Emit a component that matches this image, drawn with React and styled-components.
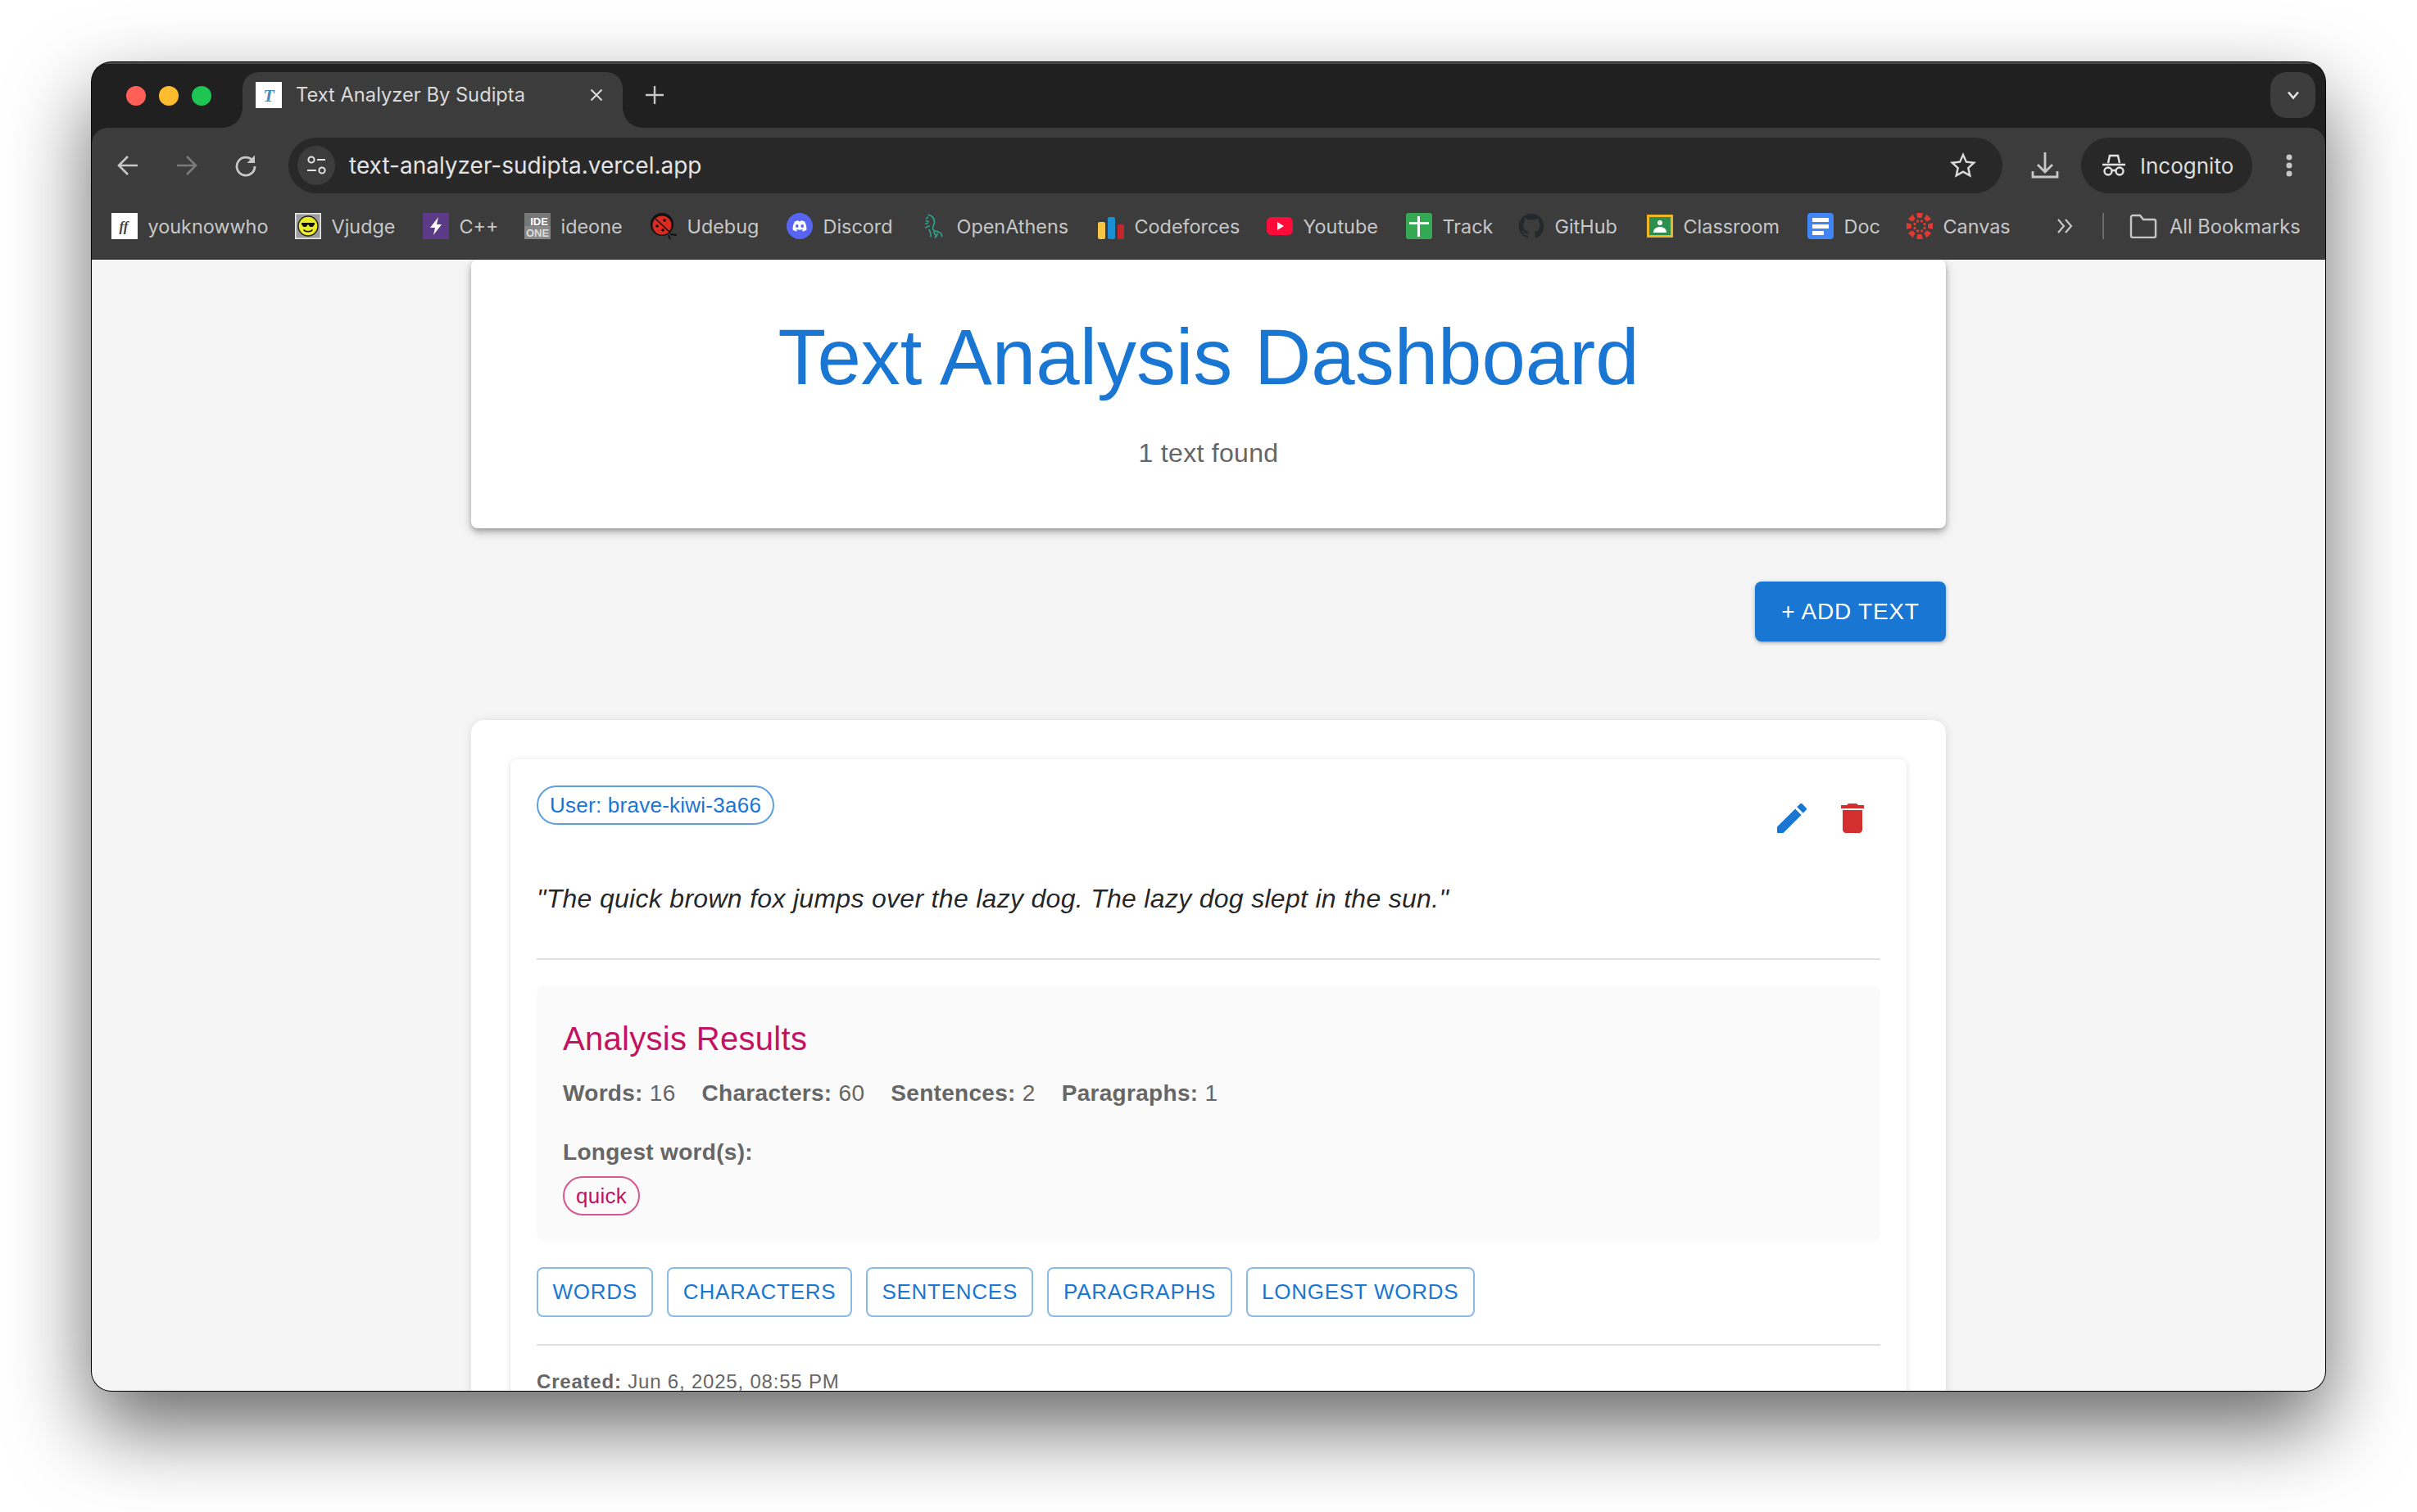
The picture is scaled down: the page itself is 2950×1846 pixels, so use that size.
import React from "react";
import styled, { createGlobalStyle } from "styled-components";

const GlobalStyle = createGlobalStyle`
  html, body { margin: 0; padding: 0; background: #fff; }
  * { box-sizing: border-box; }
`;

const UI = `Inter, "Noto Sans", sans-serif`;
const WEB = `"Liberation Sans", Arial, sans-serif`;

const Stage = styled.div`
  width: 2950px;
  height: 1846px;
  padding: 76px 112px 148px;
  background: #fff;
  overflow: hidden;
`;
const Win = styled.div`
  width: 2726px;
  height: 1622px;
  border-radius: 24px;
  overflow: hidden;
  display: flex;
  flex-direction: column;
  background: #202020;
  box-shadow: 0 0 0 1px #000, 0 44px 100px rgba(0, 0, 0, 0.6);
`;
const TabStrip = styled.div`
  height: 80px;
  flex: none;
  display: flex;
  align-items: flex-end;
  padding-left: 42px;
  padding-right: 12px;
  background: #202020;
  border-top: 2px solid #4a4a4a;
`;
const Lights = styled.div`
  display: flex;
  gap: 16px;
  align-self: flex-start;
  margin-top: 27px;
`;
const Light = styled.span`
  width: 24px;
  height: 24px;
  border-radius: 50%;
  background: ${(p) => p.$c};
`;
const Tab = styled.div`
  position: relative;
  width: 464px;
  height: 68px;
  margin-left: 38px;
  padding: 12px 0 0 16px;
  display: flex;
  align-items: flex-start;
  background: #3c3c3c;
  border-radius: 20px 20px 0 0;
  color: #dadada;
  font: 400 23.7px ${UI};
  &::before, &::after {
    content: "";
    position: absolute;
    bottom: 0;
    width: 24px;
    height: 24px;
  }
  &::before {
    left: -24px;
    background: radial-gradient(circle at 0 0, transparent 23.5px, #3c3c3c 24px);
  }
  &::after {
    right: -24px;
    background: radial-gradient(circle at 100% 0, transparent 23.5px, #3c3c3c 24px);
  }
`;
const Favicon = styled.span`
  width: 32px;
  height: 32px;
  flex: none;
  display: flex;
  background: #fff;
`;
const TabTitle = styled.span`
  margin-left: 17px;
  width: 278px;
  line-height: 32px;
  white-space: nowrap;
`;
const CloseBox = styled.span`
  margin-left: 79px;
  width: 20px;
  height: 32px;
  display: flex;
  align-items: center;
  justify-content: center;
`;
const NewTab = styled.span`
  margin-left: 28px;
  align-self: flex-start;
  margin-top: 27px;
  width: 24px;
  height: 24px;
  display: flex;
`;
const StripEnd = styled.span`
  margin-left: auto;
  align-self: flex-start;
  margin-top: 10px;
  width: 55px;
  height: 56px;
  border-radius: 20px;
  background: #3c3c3c;
  display: flex;
  align-items: center;
  justify-content: center;
`;
const Chrome = styled.div`
  flex: none;
  height: 161px;
  background: #3c3c3c;
  border-radius: 20px 20px 0 0;
  border-bottom: 1px solid #2c2c2c;
  display: flex;
  flex-direction: column;
`;
const Toolbar = styled.div`
  display: flex;
  align-items: center;
  height: 68px;
  margin-top: 12px;
  padding: 0 26px 0 8px;
  flex: none;
`;
const NavBtn = styled.span`
  width: 72px;
  display: flex;
  justify-content: center;
  flex: none;
`;
const Omnibox = styled.div`
  flex: 1;
  height: 68px;
  margin-left: 16px;
  border-radius: 34px;
  background: #282828;
  display: flex;
  align-items: center;
  padding: 0 32px 0 11px;
`;
const SiteInfo = styled.span`
  width: 46px;
  height: 48px;
  border-radius: 50%;
  background: #3c3c3c;
  display: flex;
  align-items: center;
  justify-content: center;
  flex: none;
`;
const Url = styled.span`
  margin-left: 17px;
  flex: 1;
  font: 400 28px ${UI};
  color: #e3e3e3;
  white-space: nowrap;
`;
const Download = styled.span`
  margin: 0 26px 0 34px;
  width: 36px;
  display: flex;
  flex: none;
`;
const Incognito = styled.div`
  width: 209px;
  height: 68px;
  border-radius: 34px;
  background: #282828;
  display: flex;
  align-items: center;
  padding-left: 25px;
  gap: 17px;
  color: #dcdcdc;
  font: 400 26px ${UI};
  flex: none;
`;
const Dots = styled.span`
  margin-left: 27px;
  width: 36px;
  display: flex;
  justify-content: center;
  flex: none;
`;
const Bookmarks = styled.div`
  display: flex;
  align-items: center;
  height: 56px;
  margin-top: 12px;
  padding-left: 24px;
  font: 400 23.4px ${UI};
  color: #c7c7c7;
`;
const Bookmark = styled.div`
  display: flex;
  align-items: center;
  width: ${(p) => p.$w}px;
  flex: none;
  white-space: nowrap;
  gap: 12.5px;
`;
const BookIcon = styled.span`
  width: ${(p) => p.$w || 32}px;
  height: 32px;
  display: flex;
  flex: none;
`;
const More = styled.span`
  width: 36px;
  display: flex;
  justify-content: center;
  flex: none;
`;
const Sep = styled.span`
  width: 2px;
  height: 32px;
  margin-left: 28px;
  background: #6a6a6a;
  flex: none;
`;
const AllMarks = styled.div`
  margin-left: 31px;
  display: flex;
  align-items: center;
  gap: 15px;
  font-size: 23.6px;
  white-space: nowrap;
`;

const Page = styled.main`
  flex: 1;
  min-height: 0;
  overflow: hidden;
  background: #f5f5f5;
  font-family: ${WEB};
`;
const Container = styled.div`
  width: 1800px;
  margin: 0 auto;
`;
const HeaderCard = styled.header`
  height: 328px;
  padding-top: 63px;
  background: #fff;
  border-radius: 8px;
  text-align: center;
  box-shadow: 0 3px 6px -1px rgba(0, 0, 0, 0.25), 0 6px 10px rgba(0, 0, 0, 0.14), 0 2px 18px rgba(0, 0, 0, 0.1);
`;
const Title = styled.h1`
  margin: 0 0 37px;
  font-size: 96px;
  line-height: 112px;
  font-weight: 400;
  color: #1976d2;
`;
const Subtitle = styled.p`
  margin: 0;
  font-size: 32px;
  line-height: 48px;
  letter-spacing: 0.3px;
  color: #666;
`;
const ActionRow = styled.div`
  margin-top: 65px;
  display: flex;
  justify-content: flex-end;
`;
const AddButton = styled.button`
  width: 233px;
  height: 73px;
  border: 0;
  border-radius: 8px;
  background: #1976d2;
  color: #fff;
  font: 500 28px ${WEB};
  letter-spacing: 0.8px;
  text-transform: uppercase;
  box-shadow: 0 3px 1px -2px rgba(0, 0, 0, 0.2), 0 2px 4px rgba(0, 0, 0, 0.2), 0 1px 6px rgba(0, 0, 0, 0.12);
`;
const ListCard = styled.section`
  margin-top: 96px;
  padding: 48px;
  background: #fff;
  border-radius: 16px;
  box-shadow: 0 2px 8px rgba(0, 0, 0, 0.08), 0 0 14px rgba(0, 0, 0, 0.05);
`;
const TextCard = styled.article`
  padding: 32px;
  background: #fff;
  border-radius: 8px;
  box-shadow: 0 2px 6px rgba(0, 0, 0, 0.1), 0 0 8px rgba(0, 0, 0, 0.05);
`;
const CardTop = styled.div`
  display: flex;
  justify-content: space-between;
  align-items: flex-start;
  height: 80px;
  margin-bottom: 34px;
`;
const Chip = styled.span`
  display: inline-flex;
  align-items: center;
  height: 48px;
  padding: 0 14px;
  border-radius: 24px;
  border: 2px solid ${(p) => p.$border};
  color: ${(p) => p.$color};
  font-size: 26px;
  letter-spacing: 0.25px;
  white-space: nowrap;
`;
const Actions = styled.div`
  display: flex;
  gap: 26px;
  padding: 16px 10px 0 0;
`;
const Quote = styled.p`
  margin: 0 0 49px;
  font-size: 32px;
  line-height: 48px;
  letter-spacing: 0.3px;
  font-style: italic;
  color: rgba(0, 0, 0, 0.87);
`;
const Rule = styled.hr`
  margin: 0;
  border: 0;
  height: 2px;
  background: #e0e0e0;
`;
const Analysis = styled.div`
  margin: 32px 0;
  height: 311px;
  padding: 32px;
  background: #fafafa;
  border-radius: 8px;
`;
const AnalysisTitle = styled.h2`
  margin: 0 0 11px;
  font-size: 40px;
  line-height: 64px;
  font-weight: 400;
  letter-spacing: 0.3px;
  color: #c51162;
`;
const Stats = styled.div`
  display: flex;
  gap: 32px;
  margin-bottom: 24px;
  font-size: 28px;
  line-height: 48px;
  letter-spacing: 0.3px;
  color: #666;
`;
const LongestLabel = styled.div`
  font-size: 28px;
  line-height: 48px;
  letter-spacing: 0.3px;
  color: #666;
  font-weight: 700;
  margin-bottom: 5px;
`;
const Tabs = styled.div`
  display: flex;
  gap: 17px;
  margin-bottom: 33px;
`;
const Outlined = styled.button`
  height: 61px;
  padding: 0 17.5px;
  border: 2px solid rgba(25, 118, 210, 0.5);
  border-radius: 8px;
  background: transparent;
  color: #1976d2;
  font: 500 26px ${WEB};
  letter-spacing: 0.74px;
  text-transform: uppercase;
`;
const Created = styled.p`
  margin: 30px 0 0;
  font-size: 24px;
  line-height: 28px;
  color: #666;
  letter-spacing: 0.8px;
`;

const Ico = ({ s = 32, vb = "0 0 32 32", children, ...r }) => (
  <svg width={s} height={s} viewBox={vb} fill="none" {...r}>{children}</svg>
);

const icons = {
  ykw: (
    <Ico>
      <rect width="32" height="32" fill="#fff" />
      <text x="15" y="22" textAnchor="middle" fontFamily="Liberation Serif" fontStyle="italic" fontWeight="700" fontSize="17" fill="#444">ff</text>
    </Ico>
  ),
  vj: (
    <Ico>
      <rect width="32" height="32" fill="#e8e8e8" />
      <rect x="1.500" y="1.500" width="29" height="29" fill="#9c9c9c" />
      <circle cx="16" cy="16" r="12" fill="#ecec24" stroke="#222" strokeWidth="1.5" />
      <path d="M8 12h16v2l-2.500 3h-3l-2.500-3-2.500 3h-3L8 14z" fill="#111" />
      <path d="M10.500 20.500c2.500 3 8.500 3 11 0" stroke="#111" strokeWidth="1.6" />
    </Ico>
  ),
  cpp: (
    <Ico>
      <rect width="32" height="32" fill="#5b3a87" />
      <path d="M19 5 9 18h6l-2 9 10-13h-6z" fill="#fff" />
    </Ico>
  ),
  ide: (
    <Ico>
      <rect width="32" height="32" fill="#777" />
      <rect y="16" width="32" height="16" fill="#888" />
      <text x="18" y="15" textAnchor="middle" fontFamily="Liberation Sans" fontWeight="700" fontSize="13" fill="#fff">IDE</text>
      <text x="16" y="29" textAnchor="middle" fontFamily="Liberation Sans" fontWeight="700" fontSize="13" fill="#ddd">ONE</text>
    </Ico>
  ),
  ude: (
    <Ico>
      <path d="M24 26l8 1M22 27l2 5" stroke="#111" strokeWidth="2" />
      <circle cx="14" cy="14" r="14" fill="#111" />
      <ellipse cx="14" cy="15" rx="11.500" ry="11.500" fill="#dc2a20" />
      <path d="M6 7l17 16" stroke="#111" strokeWidth="1.500" />
      <circle cx="8" cy="16" r="1.800" fill="#111" /><circle cx="17" cy="9" r="1.800" fill="#111" /><circle cx="15" cy="21" r="1.800" fill="#111" />
    </Ico>
  ),
  discord: (
    <Ico>
      <circle cx="16" cy="16" r="16" fill="#5865f2" />
      <path d="M10 10.500c2-1 3.500-1.300 4.300-1.300l.5 1c.8-.1 1.600-.1 2.400 0l.5-1c.8 0 2.300.3 4.300 1.300 1.800 3 2.600 6.300 2.400 10-1.500 1.200-3 1.800-4.400 2l-1-1.700c.6-.2 1.100-.5 1.600-.8l-.4-.3c-2.600 1.200-5.700 1.200-8.400 0l-.4.3c.5.300 1 .6 1.600.8l-1 1.700c-1.400-.2-2.900-.8-4.400-2-.2-3.700.6-7 2.400-10z" fill="#fff" />
      <ellipse cx="12.800" cy="16" rx="1.800" ry="2.100" fill="#5865f2" />
      <ellipse cx="19.200" cy="16" rx="1.800" ry="2.100" fill="#5865f2" />
    </Ico>
  ),
  athens: (
    <Ico>
      <g stroke="#2f9e88" strokeWidth="1.900" strokeLinecap="round">
        <path d="M8 1c5 1 8 4 8 10 0 4-3 5-2 9 1 3 5 3 8 4 3 1 4 3 4 6" />
        <path d="M7 4l-2 2M5 9l3 1M4 13l3-1M4 18l5-2M9 21c1 3 3 5 2 9M15 24c1 2 3 4 3 7M20 26c0 2-1 4-3 5" />
      </g>
    </Ico>
  ),
  cf: (
    <Ico>
      <rect x="0" y="11" width="9" height="21" rx="2" fill="#f6c544" />
      <rect x="12" y="5" width="9" height="27" rx="2" fill="#1b8fd4" />
      <rect x="24" y="14" width="8" height="18" rx="2" fill="#c1272d" />
    </Ico>
  ),
  yt: (
    <Ico>
      <rect x="0" y="5" width="32" height="22" rx="6" fill="#ff0b3a" />
      <path d="M13 11l8 5-8 5z" fill="#fff" />
    </Ico>
  ),
  track: (
    <Ico>
      <rect width="32" height="32" rx="3" fill="#34a853" />
      <path d="M4 11h24v3H4zM14 4h3v25h-3z" fill="#fff" />
    </Ico>
  ),
  gh: (
    <Ico vb="0 0 24 24">
      <path d="M12 .5C5.650.5.500 5.650.500 12c0 5.100 3.300 9.400 7.900 10.900.6.100.800-.250.800-.550v-2c-3.200.700-3.900-1.500-3.900-1.500-.500-1.300-1.300-1.700-1.300-1.700-1-.700.100-.700.100-.700 1.200.100 1.800 1.200 1.800 1.200 1 1.800 2.700 1.300 3.400 1 .100-.750.400-1.300.700-1.600-2.600-.300-5.300-1.300-5.300-5.700 0-1.300.450-2.300 1.200-3.100-.100-.300-.500-1.500.100-3.100 0 0 1-.300 3.300 1.200a11.400 11.400 0 0 1 6 0c2.300-1.500 3.300-1.200 3.300-1.200.650 1.600.250 2.800.100 3.100.750.800 1.200 1.850 1.200 3.100 0 4.400-2.700 5.400-5.300 5.700.450.350.800 1.100.800 2.200v3.250c0 .300.200.650.800.550A11.500 11.500 0 0 0 23.500 12C23.500 5.650 18.350.500 12 .500z" fill="#24292e" />
    </Ico>
  ),
  classroom: (
    <Ico>
      <rect y="2" width="32" height="28" fill="#f0b429" />
      <rect x="3" y="5" width="26" height="22" fill="#2c8f4e" />
      <circle cx="16" cy="12" r="3" fill="#fff" />
      <path d="M8 24c0-5 4-7 8-7s8 2 8 7z" fill="#fff" />
    </Ico>
  ),
  doc: (
    <Ico>
      <rect width="32" height="32" rx="4" fill="#4285f4" />
      <path d="M6 6h20v5H6zM6 14h20v5H6zM6 22h14v5H6z" fill="#fff" />
    </Ico>
  ),
  canvas: (
    <Ico>
      <g fill="#e03a32">
        {[0, 45, 90, 135, 180, 225, 270, 315].map((a) => (
          <path key={a} d="M12 0h8l-1.500 6h-5z" transform={`rotate(${a} 16 16)`} />
        ))}
        {[22, 67, 112, 157, 202, 247, 292, 337].map((a) => (
          <circle key={a} cx="16" cy="9.500" r="1.700" transform={`rotate(${a} 16 16)`} />
        ))}
      </g>
    </Ico>
  ),
};

const marks = [
  ["youknowwho", "ykw", 224],
  ["Vjudge", "vj", 156],
  ["C++", "cpp", 124],
  ["ideone", "ide", 154],
  ["Udebug", "ude", 166],
  ["Discord", "discord", 166],
  ["OpenAthens", "athens", 214, 29],
  ["Codeforces", "cf", 206],
  ["Youtube", "yt", 170],
  ["Track", "track", 137],
  ["GitHub", "gh", 157],
  ["Classroom", "classroom", 196],
  ["Doc", "doc", 121],
  ["Canvas", "canvas", 175],
];

export default function App() {
  return (
    <Stage>
      <GlobalStyle />
      <Win>
        <TabStrip>
          <Lights>
            <Light $c="#ff5f57" />
            <Light $c="#febc2e" />
            <Light $c="#1fc552" />
          </Lights>
          <Tab>
            <Favicon>
              <Ico>
                <text x="16" y="24" textAnchor="middle" fontFamily="Liberation Serif" fontStyle="italic" fontWeight="700" fontSize="22" fill="#4a8bb8">T</text>
              </Ico>
            </Favicon>
            <TabTitle>Text Analyzer By Sudipta</TabTitle>
            <CloseBox>
              <Ico s={16} vb="0 0 16 16"><path d="M1.500 1.500l13 13M14.500 1.500l-13 13" stroke="#d8d8d8" strokeWidth="2.200" /></Ico>
            </CloseBox>
          </Tab>
          <NewTab>
            <Ico s={22} vb="0 0 22 22"><path d="M11 0v22M0 11h22" stroke="#c7c7c7" strokeWidth="2.400" /></Ico>
          </NewTab>
          <StripEnd>
            <Ico s={18} vb="0 0 18 18"><path d="M3 5.500l6 7 6-7" stroke="#e3e3e3" strokeWidth="2.600" /></Ico>
          </StripEnd>
        </TabStrip>
        <Chrome>
          <Toolbar>
            <NavBtn>
              <Ico s={28} vb="0 0 28 28"><path d="M26 14H3M14 3 3 14l11 11" stroke="#c7c7c7" strokeWidth="2.600" /></Ico>
            </NavBtn>
            <NavBtn>
              <Ico s={28} vb="0 0 28 28"><path d="M2 14h23M14 3l11 11-11 11" stroke="#7b7b7b" strokeWidth="2.600" /></Ico>
            </NavBtn>
            <NavBtn>
              <Ico s={28} vb="0 0 28 28"><path d="M22.800 8.500A11 11 0 1 0 25 15" stroke="#c7c7c7" strokeWidth="2.800" /><path d="M25 1.500v9.500h-9.500z" fill="#c7c7c7" /></Ico>
            </NavBtn>
            <Omnibox>
              <SiteInfo>
                <Ico s={26} vb="0 0 26 26">
                  <circle cx="7" cy="6" r="3.600" stroke="#e3e3e3" strokeWidth="2" />
                  <path d="M14 6h10M2 19h11" stroke="#e3e3e3" strokeWidth="2.200" />
                  <circle cx="20" cy="19" r="3.600" stroke="#e3e3e3" strokeWidth="2" />
                </Ico>
              </SiteInfo>
              <Url>text-analyzer-sudipta.vercel.app</Url>
              <Ico s={32} vb="0 0 32 32"><path d="M16 3l3.900 8.700 9.400 1-7 6.400 2 9.300-8.300-4.800-8.300 4.800 2-9.300-7-6.400 9.400-1z" stroke="#dcdcdc" strokeWidth="2.400" strokeLinejoin="miter" /></Ico>
            </Omnibox>
            <Download>
              <Ico s={36} vb="0 0 36 36"><path d="M18 2v24M9 17l9 9 9-9" stroke="#c7c7c7" strokeWidth="2.800" /><path d="M3 25v7h30v-7" stroke="#c7c7c7" strokeWidth="2.800" /></Ico>
            </Download>
            <Incognito>
              <Ico s={30} vb="0 0 30 30">
                <path d="M8 12l2-9h10l2 9M1 14h28" stroke="#e3e3e3" strokeWidth="2.400" />
                <circle cx="8" cy="22" r="4.500" stroke="#e3e3e3" strokeWidth="2.400" />
                <circle cx="22" cy="22" r="4.500" stroke="#e3e3e3" strokeWidth="2.400" />
                <path d="M12.500 21h5" stroke="#e3e3e3" strokeWidth="2.400" />
              </Ico>
              <span>Incognito</span>
            </Incognito>
            <Dots>
              <svg width="8" height="28" viewBox="0 0 8 28" fill="#c7c7c7">
                <circle cx="4" cy="4" r="3.500" />
                <circle cx="4" cy="14" r="3.500" />
                <circle cx="4" cy="24" r="3.500" />
              </svg>
            </Dots>
          </Toolbar>
          <Bookmarks>
            {marks.map(([label, key, w, iw]) => (
              <Bookmark key={label} $w={w}>
                <BookIcon $w={iw}>{icons[key]}</BookIcon>
                {label}
              </Bookmark>
            ))}
            <More>
              <Ico s={22} vb="0 0 22 22"><path d="M3 3l7 8-7 8M12 3l7 8-7 8" stroke="#c7c7c7" strokeWidth="2.200" /></Ico>
            </More>
            <Sep />
            <AllMarks>
              <svg width="34" height="30" viewBox="0 0 34 30" fill="none">
                <path d="M2 27V4a2 2 0 0 1 2-2h9l4 5h13a2 2 0 0 1 2 2v18a2 2 0 0 1-2 2H4a2 2 0 0 1-2-2z" stroke="#c7c7c7" strokeWidth="2.400" />
              </svg>
              All Bookmarks
            </AllMarks>
          </Bookmarks>
        </Chrome>
        <Page>
          <Container>
            <HeaderCard>
              <Title>Text Analysis Dashboard</Title>
              <Subtitle>1 text found</Subtitle>
            </HeaderCard>
            <ActionRow>
              <AddButton>+ Add Text</AddButton>
            </ActionRow>
            <ListCard>
              <TextCard>
                <CardTop>
                  <Chip $border="rgba(25,118,210,0.7)" $color="#1976d2">User: brave-kiwi-3a66</Chip>
                  <Actions>
                    <Ico s={48} vb="0 0 24 24"><path fill="#1976d2" d="M3 17.250V21h3.750L17.810 9.940l-3.750-3.750L3 17.250zM20.710 7.040c.39-.39.39-1.020 0-1.410l-2.340-2.340a.9959.9959 0 0 0-1.410 0l-1.830 1.830 3.750 3.750 1.830-1.830z" /></Ico>
                    <Ico s={48} vb="0 0 24 24"><path fill="#d32f2f" d="M6 19c0 1.100.9 2 2 2h8c1.100 0 2-.9 2-2V7H6v12zM19 4h-3.500l-1-1h-5l-1 1H5v2h14V4z" /></Ico>
                  </Actions>
                </CardTop>
                <Quote>"The quick brown fox jumps over the lazy dog. The lazy dog slept in the sun."</Quote>
                <Rule />
                <Analysis>
                  <AnalysisTitle>Analysis Results</AnalysisTitle>
                  <Stats>
                    <span><b>Words:</b> 16</span>
                    <span><b>Characters:</b> 60</span>
                    <span><b>Sentences:</b> 2</span>
                    <span><b>Paragraphs:</b> 1</span>
                  </Stats>
                  <LongestLabel>Longest word(s):</LongestLabel>
                  <Chip $border="rgba(197,17,98,0.7)" $color="#c51162">quick</Chip>
                </Analysis>
                <Tabs>
                  <Outlined>Words</Outlined>
                  <Outlined>Characters</Outlined>
                  <Outlined>Sentences</Outlined>
                  <Outlined>Paragraphs</Outlined>
                  <Outlined>Longest Words</Outlined>
                </Tabs>
                <Rule />
                <Created><b>Created:</b> Jun 6, 2025, 08:55 PM</Created>
              </TextCard>
            </ListCard>
          </Container>
        </Page>
      </Win>
    </Stage>
  );
}
